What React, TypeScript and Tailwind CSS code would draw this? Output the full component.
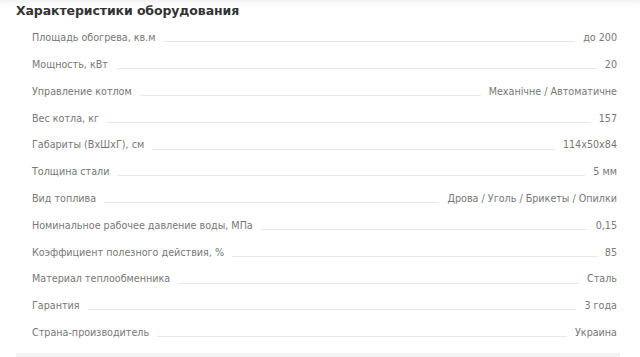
import React from 'react';

const SPECS: [string, string][] = [
  ['Площадь обогрева, кв.м', 'до 200'],
  ['Мощность, кВт', '20'],
  ['Управление котлом', 'Механічне / Автоматичне'],
  ['Вес котла, кг', '157'],
  ['Габариты (ВхШхГ), см', '114х50х84'],
  ['Толщина стали', '5 мм'],
  ['Вид топлива', 'Дрова / Уголь / Брикеты / Опилки'],
  ['Номинальное рабочее давление воды, МПа', '0,15'],
  ['Коэффициент полезного действия, %', '85'],
  ['Материал теплообменника', 'Сталь'],
  ['Гарантия', '3 года'],
  ['Страна-производитель', 'Украина'],
];

const App: React.FC = () => {
  return (
    <div className="h-[357px] w-[640px] overflow-hidden bg-white shadow-[inset_0_6px_6px_-4px_rgba(0,0,0,0.07)] font-['DejaVu_Sans',sans-serif]">
      <div className="pl-4 pr-5">
        <h2 className="pt-[2px] text-[12.5px] font-bold leading-[18px] tracking-[-0.1px] text-[#333]">Характеристики оборудования</h2>
        <ul className="mt-[5px] pl-4 pr-[3px]">
          {SPECS.map(([label, value]) => (
            <li key={label} className="flex h-[26.8px] items-center text-[9.6px] text-[#777]">
              <span className="whitespace-nowrap">{label}</span>
              <span className="mx-2 mt-[7px] flex-1 border-b border-[#e8e8e8]" />
              <span className="whitespace-nowrap">{value}</span>
            </li>
          ))}
        </ul>
        <div className="mt-[6px] h-[6px] bg-[#f2f2f2]" />
      </div>
    </div>
  );
};

export default App;
